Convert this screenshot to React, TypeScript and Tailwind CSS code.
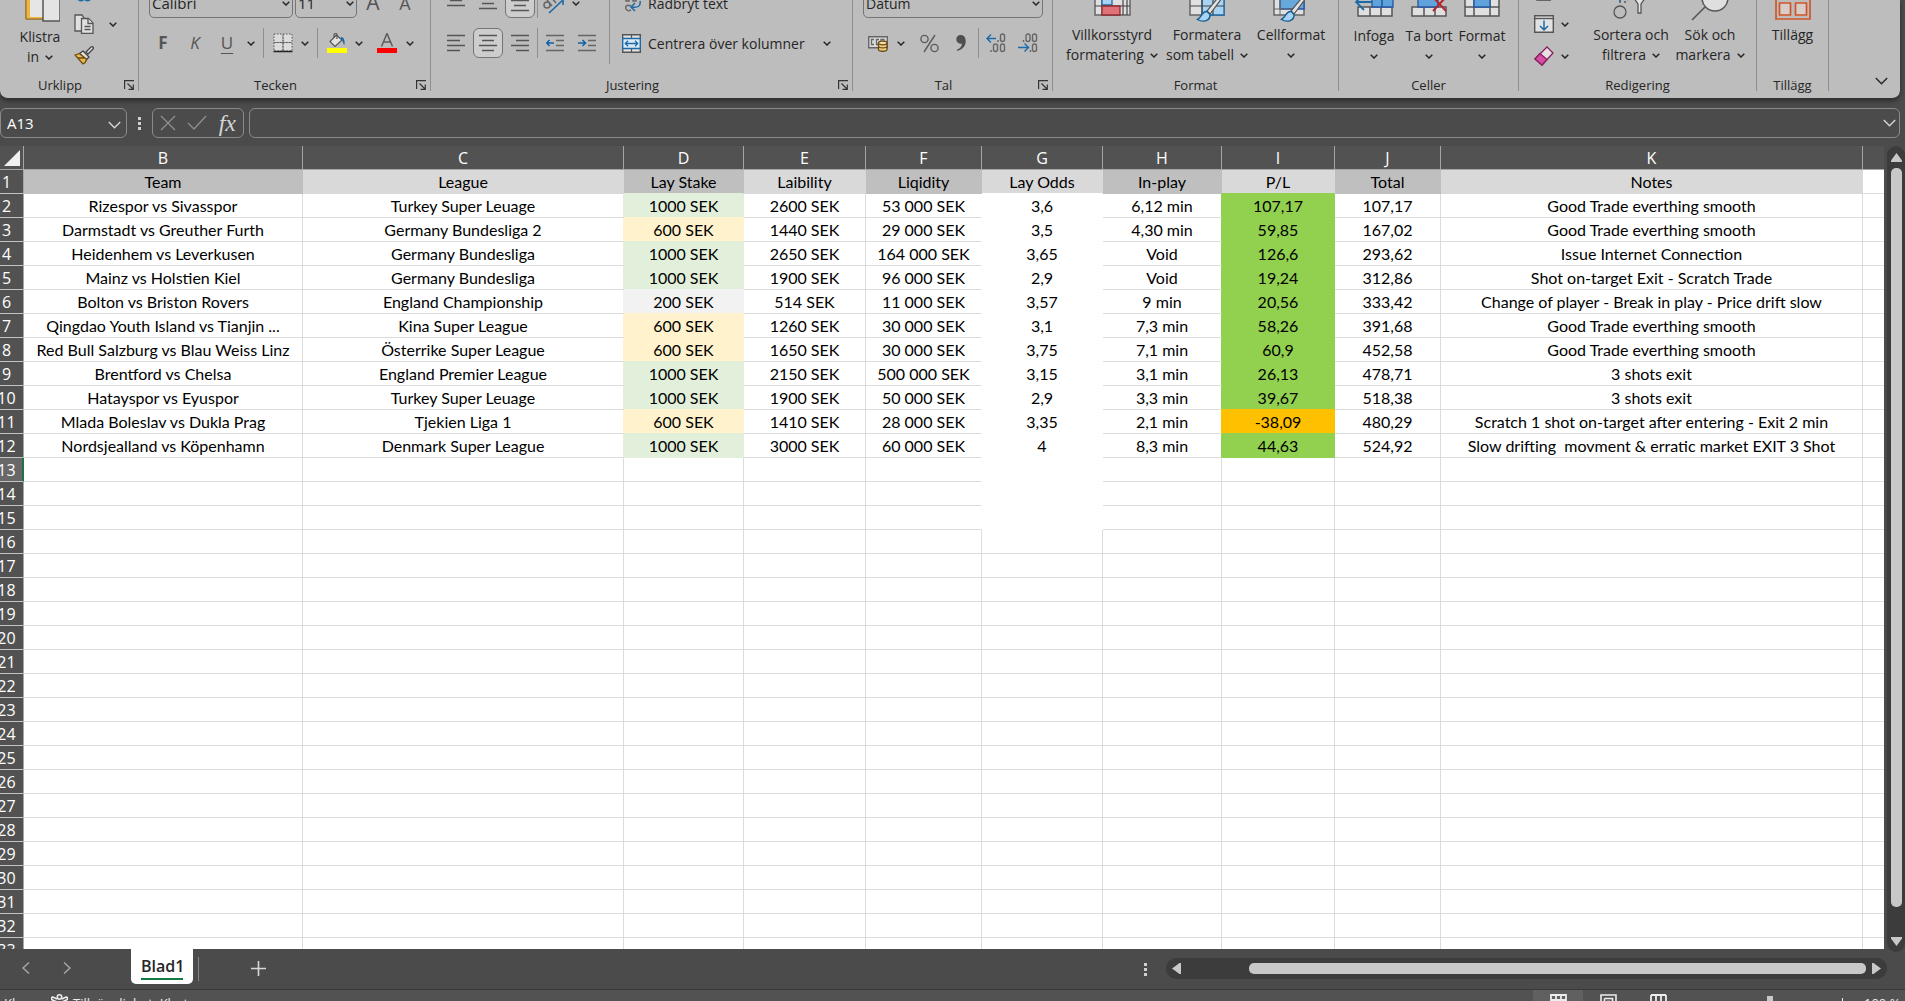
import React from 'react';

type Fill = 'dark' | 'light' | 'green' | 'yellow' | 'gray' | 'profit' | 'loss' | 'white' | 'none';

const bg: Record<Fill, string> = {
  dark: 'bg-[#bfbfbf]',
  light: 'bg-[#d9d9d9]',
  green: 'bg-[#e2efda]',
  yellow: 'bg-[#fff2cc]',
  gray: 'bg-[#f2f2f2]',
  profit: 'bg-[#92d050]',
  loss: 'bg-[#ffc000]',
  white: 'bg-white',
  none: '',
};

const right: Record<Fill, string> = {
  dark: 'border-r-[#bfbfbf]',
  light: 'border-r-[#d9d9d9]',
  green: 'border-r-[#e2efda]',
  yellow: 'border-r-[#fff2cc]',
  gray: 'border-r-[#f2f2f2]',
  profit: 'border-r-[#92d050]',
  loss: 'border-r-[#ffc000]',
  white: 'border-r-white',
  none: 'border-r-[#dcdcdc]',
};

const bottom: Record<Fill, string> = {
  dark: 'border-b-[#bfbfbf]',
  light: 'border-b-[#d9d9d9]',
  green: 'border-b-[#e2efda]',
  yellow: 'border-b-[#fff2cc]',
  gray: 'border-b-[#f2f2f2]',
  profit: 'border-b-[#92d050]',
  loss: 'border-b-[#ffc000]',
  white: 'border-b-white',
  none: 'border-b-[#dcdcdc]',
};

const letters = ['B', 'C', 'D', 'E', 'F', 'G', 'H', 'I', 'J', 'K'];

const rows = [
  ['Team', 'League', 'Lay Stake', 'Laibility', 'Liqidity', 'Lay Odds', 'In-play', 'P/L', 'Total', 'Notes'],
  ['Rizespor vs Sivasspor', 'Turkey Super Leuage', '1000 SEK', '2600 SEK', '53 000 SEK', '3,6', '6,12 min', '107,17', '107,17', 'Good Trade everthing smooth'],
  ['Darmstadt vs Greuther Furth', 'Germany Bundesliga 2', '600 SEK', '1440 SEK', '29 000 SEK', '3,5', '4,30 min', '59,85', '167,02', 'Good Trade everthing smooth'],
  ['Heidenhem vs Leverkusen', 'Germany Bundesliga', '1000 SEK', '2650 SEK', '164 000 SEK', '3,65', 'Void', '126,6', '293,62', 'Issue Internet Connection'],
  ['Mainz vs Holstien Kiel', 'Germany Bundesliga', '1000 SEK', '1900 SEK', '96 000 SEK', '2,9', 'Void', '19,24', '312,86', 'Shot on-target Exit - Scratch Trade'],
  ['Bolton vs Briston Rovers', 'England Championship', '200 SEK', '514 SEK', '11 000 SEK', '3,57', '9 min', '20,56', '333,42', 'Change of player - Break in play - Price drift slow'],
  ['Qingdao Youth Island vs Tianjin ...', 'Kina Super League', '600 SEK', '1260 SEK', '30 000 SEK', '3,1', '7,3 min', '58,26', '391,68', 'Good Trade everthing smooth'],
  ['Red Bull Salzburg vs Blau Weiss Linz', 'Österrike Super League', '600 SEK', '1650 SEK', '30 000 SEK', '3,75', '7,1 min', '60,9', '452,58', 'Good Trade everthing smooth'],
  ['Brentford vs Chelsa', 'England Premier League', '1000 SEK', '2150 SEK', '500 000 SEK', '3,15', '3,1 min', '26,13', '478,71', '3 shots exit'],
  ['Hatayspor vs Eyuspor', 'Turkey Super Leuage', '1000 SEK', '1900 SEK', '50 000 SEK', '2,9', '3,3 min', '39,67', '518,38', '3 shots exit'],
  ['Mlada Boleslav vs Dukla Prag', 'Tjekien Liga 1', '600 SEK', '1410 SEK', '28 000 SEK', '3,35', '2,1 min', '-38,09', '480,29', 'Scratch 1 shot on-target after entering - Exit 2 min'],
  ['Nordsjealland vs Köpenhamn', 'Denmark Super League', '1000 SEK', '3000 SEK', '60 000 SEK', '4', '8,3 min', '44,63', '524,92', 'Slow drifting  movment & erratic market EXIT 3 Shot'],
];

const fillOf = (row: number, col: number): Fill => {
  if (col > 9 || row > 33) return 'none';
  if (row === 1) return [0, 2, 4, 6, 8].includes(col) ? 'dark' : 'light';
  if (col === 5 && row <= 15) return 'white';
  if (row > 12) return 'none';
  if (col === 2) {
    const stake = rows[row - 1][2];
    if (stake === '1000 SEK') return 'green';
    return stake === '600 SEK' ? 'yellow' : 'gray';
  }
  if (col === 7) return rows[row - 1][7].startsWith('-') ? 'loss' : 'profit';
  return 'none';
};

const cellClass = (row: number, col: number) => {
  const own = fillOf(row, col);
  const next = fillOf(row, col + 1);
  const below = fillOf(row + 1, col);
  const r = next !== 'none' && row > 1 ? next : own;
  const b = below !== 'none' ? below : own;
  return `${bg[own]} ${right[r]} ${bottom[b]}`;
};

const Chevron = ({ className = 'h-[5px] w-[8px]' }: { className?: string }) => (
  <svg className={className} viewBox="0 0 8 5" fill="none" stroke="currentColor" strokeWidth="1.5">
    <path d="M.7.7 4 4 7.3.7" />
  </svg>
);

const ThinChevron = () => (
  <svg className="h-[8px] w-[13px]" viewBox="0 0 13 8" fill="none" stroke="currentColor" strokeWidth="1.4">
    <path d="M.8 1 6.5 6.7 12.2 1" />
  </svg>
);

const Drop = ({ label }: { label: string }) => (
  <button aria-label={label} className="flex h-[30px] w-4 items-center justify-center">
    <Chevron />
  </button>
);

const Tool = ({ label, className, children }: { label: string; className: string; children: React.ReactNode }) => (
  <button aria-label={label} className={`flex h-[30px] shrink-0 items-center justify-center ${className}`}>
    {children}
  </button>
);

const Sep = ({ className }: { className: string }) => <div className={`h-[30px] w-px shrink-0 bg-[#8f8f8f] ${className}`} />;

const Lines = ({ rows: r }: { rows: [number, number][] }) => (
  <svg className="h-[18px] w-[18px]" viewBox="0 0 18 18" fill="none" stroke="#555" strokeWidth="1.5">
    {r.map(([a, b], i) => (
      <path key={i} d={`M${a} ${1.5 + i * 5}H${b}`} />
    ))}
  </svg>
);

const Indent = ({ flip }: { flip?: boolean }) => (
  <svg className="h-[18px] w-[18px]" viewBox="0 0 18 18" fill="none" stroke="#666" strokeWidth="1.5">
    <path d="M0 1.5h18M10 6.5h8M10 11.5h8M0 16.5h18" />
    <path d={flip ? 'M0 9h7M4.500 6 7.500 9l-3 3' : 'M8 9H1M3.500 6 .8 9l2.700 3'} stroke="#0f62a8" />
  </svg>
);

type GroupProps = { title: string; width: string; launcher?: boolean; children: React.ReactNode };

const Group = ({ title, width, launcher, children }: GroupProps) => (
  <section className={`flex h-[91px] shrink-0 flex-col justify-end border-r border-[#8f8f8f] ${width}`}>
    {children}
    <div className="flex h-3 items-center">
      <h2 className={`flex-1 text-center text-[13px] leading-[14px] ${launcher ? 'pr-1' : ''}`}>{title}</h2>
      {launcher && (
        <button aria-label={`${title}, fler alternativ`} className="mr-1">
          <svg className="h-[10px] w-[10px]" viewBox="0 0 10 10" fill="none" stroke="#333" strokeWidth="1.2">
            <path d="M.6 9V.6H10M3.500 3.500l5.500 5.500M9.300 4.500v4.800H4.500" />
          </svg>
        </button>
      )}
    </div>
  </section>
);

type BigProps = { lines: string[]; width: string; lastRow?: boolean; children: React.ReactNode };

// large ribbon button: picture on top, one or two lines of text, chevron last
const Big = ({ lines, width, lastRow, children }: BigProps) => (
  <button className={`flex shrink-0 flex-col items-center text-[14px] leading-5 whitespace-nowrap ${width}`}>
    <svg className="h-10 w-10" viewBox="0 0 40 40" fill="none">
      {children}
    </svg>
    <span>{lines[0]}</span>
    <span className="flex h-5 items-center gap-[6px]">
      {lines[1]}
      {!lastRow && <Chevron />}
    </span>
  </button>
);

const Brush = () => (
  <>
    <path d="M38 9 23 29l-3-3L34 9z" fill="#e4e4e4" stroke="#555" strokeWidth="1.2" />
    <path d="M20 26.500c-5-1-5 6-9.500 8 6 3.500 13 1 12.500-5z" fill="#a9d3f3" stroke="#155e94" strokeWidth="1.4" />
  </>
);

const Ribbon = () => (
  <header className="mr-[5px] flex h-[99px] shrink-0 items-start overflow-hidden rounded-b-lg border-b border-[#333] bg-[#bdbdbd] text-[#262626] shadow-[0_2px_4px_#2b2b2b]">
    <Group title="Urklipp" width="w-[139px]" launcher>
      <div className="flex items-end pb-[6px] pl-[9px]">
        <div className="pb-[6px]">
          <Big lines={['Klistra', 'in']} width="w-[62px]">
            <path d="M6 0v32h17" stroke="#c98a1d" strokeWidth="1.500" />
            <path d="M6 0h18v32H6z" fill="#f1b53c" stroke="#7d6a45" />
            <path d="M10 0h14v30H10z" fill="#e6e6e6" />
            <path d="M23 10h17v24H23z" fill="#e4e4e4" stroke="#555" strokeWidth="1.500" />
          </Big>
        </div>
        <div className="ml-px">
          <div className="flex">
            <Tool label="Klipp ut" className="mb-[2px] w-6">
              <svg className="h-5 w-5" viewBox="0 0 20 20" fill="none" stroke="#1a6aa8" strokeWidth="1.800">
                <circle cx="7" cy="15.500" r="3" />
                <circle cx="13.500" cy="15.500" r="3" />
                <path d="M8 13 14 0M12 13 6 0" stroke="#555" />
              </svg>
            </Tool>
          </div>
          <div className="flex gap-[9px]">
            <Tool label="Kopiera" className="mb-[2px] w-6">
              <svg className="h-5 w-5" viewBox="0 0 20 20" fill="#e0e0e0" stroke="#555" strokeWidth="1.300">
                <path d="M7 17H1V1h7l2 3" />
                <path d="M7.500 4.500h7l4.500 4.500v10.300H7.500z" />
                <path d="M14 4.500v5h5M10.500 12.500h6M10.500 15.500h6" />
              </svg>
            </Tool>
            <Drop label="Kopieringsalternativ" />
          </div>
          <Tool label="Hämta format" className="mb-[2px] w-6">
            <svg className="h-5 w-5" viewBox="0 0 20 20" strokeWidth="1.300">
              <path d="m12 6 5-5c2-1 3 1 2 2l-5 5z" fill="#e0e0e0" stroke="#444" />
              <path d="M9 5l6 6-2.500 2.500-7-6z" fill="#e0e0e0" stroke="#444" />
              <path d="M5.500 7.500 1 9l8 9c3-1 3-3 3.500-4.500z" fill="#e9b949" stroke="#6b4c14" />
              <path d="M4 12h6" stroke="#6b4c14" />
            </svg>
          </Tool>
        </div>
      </div>
    </Group>

    <Group title="Tecken" width="w-[292px]" launcher>
      <div className="flex flex-col gap-[10px] pb-[21px]">
        <div className="flex items-center pl-[10px]">
          <div className="relative mr-[2px]">
            <select aria-label="Teckensnitt" className="h-[30px] w-36 appearance-none rounded-[5px] border border-[#757575] pl-[2px] text-[15px]">
              <option>Calibri</option>
            </select>
            <span className="pointer-events-none absolute top-[13px] right-[3px]"><Chevron /></span>
          </div>
          <div className="relative">
            <select aria-label="Teckenstorlek" className="h-[30px] w-[62px] appearance-none rounded-[5px] border border-[#757575] pl-[2px] text-[15px]">
              <option>11</option>
            </select>
            <span className="pointer-events-none absolute top-[13px] right-[3px]"><Chevron /></span>
          </div>
          <Tool label="Öka teckenstorlek" className="w-8 text-[21px] text-[#555]">A</Tool>
          <Tool label="Minska teckenstorlek" className="w-8 text-[18px] text-[#555]">A</Tool>
        </div>
        <div className="flex items-center pl-2">
          <Tool label="Fet" className="w-8 text-[17px] font-bold text-[#555]">F</Tool>
          <Tool label="Kursiv" className="w-8 text-[17px] text-[#555] italic">K</Tool>
          <Tool label="Understruken" className="w-8 text-[17px] text-[#555] underline underline-offset-4">U</Tool>
          <Drop label="Understrykning" />
          <Sep className="mx-1" />
          <Tool label="Kantlinjer" className="w-[29px]">
            <svg className="h-[20px] w-[20px]" viewBox="0 0 20 20" fill="none" stroke="#555">
              <path d="M1 1h18v17H1z" fill="#dcdcdc" stroke="none" />
              <path d="M1 1h18v17H1zM10 1v17M1 9.500h18" strokeDasharray="1.500 1.500" />
              <path d="M10 2v16M1 9.500h18" strokeWidth=".6" />
              <path d="M.5 18.500h19" stroke="#222" strokeWidth="1.500" />
            </svg>
          </Tool>
          <Drop label="Fler kantlinjer" />
          <Sep className="mx-1" />
          <Tool label="Fyllningsfärg" className="w-[29px]">
            <svg className="h-[20px] w-[20px]" viewBox="0 0 20 20" fill="none">
              <path d="M9.500 2 3 8.500 8 13.500l7-6.500z" fill="#e2e2e2" stroke="#555" strokeWidth="1.200" />
              <path d="M7 5V2c0-2 3-2 3 0v4" stroke="#555" strokeWidth="1.200" />
              <path d="M14 4c3 0 4 3 3.500 8-2-1-1-5-3.500-5z" fill="#1c6ba8" />
              <path d="M0 15h20v5H0z" fill="#ff0" />
            </svg>
          </Tool>
          <Drop label="Fler fyllningsfärger" />
          <Tool label="Teckenfärg" className="ml-[5px] w-[30px]">
            <svg className="h-[20px] w-[20px]" viewBox="0 0 20 20" fill="none">
              <path d="M4.500 13.500 10 .5l5.500 13M6.500 9h7" stroke="#5c5c5c" strokeWidth="1.500" />
              <path d="M0 15h20v5H0z" fill="red" />
            </svg>
          </Tool>
          <Drop label="Fler teckenfärger" />
        </div>
      </div>
    </Group>

    <Group title="Justering" width="w-[422px]" launcher>
      <div className="flex items-end pl-[9px]">
        <div className="flex flex-col gap-[10px] pb-[21px]">
          <div className="flex items-center">
            <Tool label="Justera överst" className="w-8"><Lines rows={[[0, 18], [3, 15], [0, 18]]} /></Tool>
            <Tool label="Centrera lodrätt" className="w-8 pt-[6px]"><Lines rows={[[0, 18], [3, 15], [0, 18]]} /></Tool>
            <Tool label="Justera nederst" className="mx-px w-[30px] rounded-md border border-[#757575] bg-[#cdcdcd] pt-[10px]"><Lines rows={[[0, 18], [3, 15], [0, 18]]} /></Tool>
            <Sep className="ml-px" />
            <Tool label="Orientering" className="w-[30px]">
              <svg className="h-[22px] w-[22px]" viewBox="0 0 22 22" fill="none">
                <circle cx="5" cy="13" r="3" stroke="#666" strokeWidth="1.500" />
                <path d="m5 8 5 6M8 4l6 7" stroke="#666" strokeWidth="1.500" />
                <path d="M7 21 21 8m-6-1h6v6" stroke="#1c6ba8" strokeWidth="1.600" />
              </svg>
            </Tool>
            <Drop label="Orienteringsalternativ" />
          </div>
          <div className="flex items-center">
            <Tool label="Vänsterjustera" className="w-8"><Lines rows={[[0, 18], [0, 13], [0, 18], [0, 13]]} /></Tool>
            <Tool label="Centrera" className="mx-px w-[30px] rounded-md border border-[#757575] bg-[#cdcdcd]"><Lines rows={[[0, 18], [3, 15], [0, 18], [3, 15]]} /></Tool>
            <Tool label="Högerjustera" className="w-8"><Lines rows={[[0, 18], [5, 18], [0, 18], [5, 18]]} /></Tool>
            <Sep className="ml-px" />
            <Tool label="Minska indrag" className="w-[34px]"><Indent /></Tool>
            <Tool label="Öka indrag" className="w-[30px]"><Indent flip /></Tool>
          </div>
        </div>
        <div className="mb-[15px] ml-[7px] h-[80px] w-px bg-[#8f8f8f]" />
        <div className="flex flex-col gap-[10px] pb-[21px] pl-3 text-[14px]">
          <button className="flex h-[30px] items-center gap-[7px]">
            <svg className="h-[20px] w-[19px]" viewBox="0 0 19 20" fill="none" strokeWidth="1.500">
              <path d="M4 3v5h3V5H4M11 2v6h3V5h-3M9 13c-4-2-6 0-5 3 1 2 3 2 5 1" stroke="#666" />
              <path d="M18 8c1 5-2 7-8 6m3-4-4 4 4 4" stroke="#1c6ba8" />
            </svg>
            Radbryt text
          </button>
          <div className="flex items-center">
            <button className="flex h-[30px] w-[197px] items-center gap-[7px] whitespace-nowrap">
              <svg className="h-[19px] w-[19px]" viewBox="0 0 19 19" fill="none">
                <path d="M.7.7h17.600v17.600H.7z" fill="#e0e0e0" stroke="#555" strokeWidth="1.400" />
                <path d="M9.500 1v17" stroke="#555" strokeWidth="1.200" />
                <path d="M.7 4.500h17.600v10H.7z" fill="#dceaf5" stroke="#1c6ba8" strokeWidth="1.400" />
                <path d="M3.500 9.500h12M6 6.800 3.300 9.500 6 12.200M13 6.800l2.700 2.700-2.700 2.700" stroke="#1c6ba8" strokeWidth="1.300" />
              </svg>
              Centrera över kolumner
            </button>
            <Drop label="Fler kopplingsalternativ" />
          </div>
        </div>
      </div>
    </Group>

    <Group title="Tal" width="w-[200px]" launcher>
      <div className="flex flex-col gap-[10px] pb-[21px] pl-[10px]">
        <div className="relative w-[180px]">
          <select aria-label="Talformat" className="h-[30px] w-full appearance-none rounded-[5px] border border-[#757575] pl-[2px] text-[14px]">
            <option>Datum</option>
          </select>
          <span className="pointer-events-none absolute top-[13px] right-[3px]"><Chevron /></span>
        </div>
        <div className="flex items-center">
          <Tool label="Redovisningsformat" className="w-[30px]">
            <svg className="h-[18px] w-[20px]" viewBox="0 0 20 18" fill="none">
              <path d="M.7 2.700h18.600v11H.7z" fill="#dadada" stroke="#666" strokeWidth="1.400" />
              <path d="M6 5.500H3.500v5H6M11 5.500H8.500v5H10M13 8V5.500h3V8" stroke="#666" strokeWidth="1.300" />
              <path d="M10.500 9v6.500c0 2.300 8.500 2.300 8.500 0V9z" fill="#f0cf85" stroke="#6b4c14" strokeWidth="1.300" />
              <ellipse cx="14.750" cy="9" rx="4.250" ry="1.800" fill="#f5dca5" stroke="#6b4c14" strokeWidth="1.300" />
              <path d="M10.500 12.300c0 2.200 8.500 2.200 8.500 0" stroke="#6b4c14" strokeWidth="1.200" />
            </svg>
          </Tool>
          <Drop label="Fler redovisningsformat" />
          <Tool label="Procentformat" className="w-[40px]">
            <svg className="h-[19px] w-[19px]" viewBox="0 0 19 19" fill="none" stroke="#5c5c5c" strokeWidth="1.400">
              <circle cx="4.500" cy="5" r="3.600" />
              <circle cx="14.500" cy="14" r="3.600" />
              <path d="M15 1 4 18" />
            </svg>
          </Tool>
          <Tool label="Kommaavgränsat format" className="w-6">
            <svg className="h-[16px] w-[10px]" viewBox="0 0 10 16" fill="#4f4f4f">
              <path d="M4.500 0C7.500 0 9.700 2 9.700 6c0 5-3 8.500-8.500 10l-.4-1.200C4 13.500 6 11.500 6 8.500 2.500 9.500.3 7 .3 4.300.3 1.800 2 0 4.500 0z" />
            </svg>
          </Tool>
          <Sep className="ml-[5px]" />
          <Tool label="Öka decimal" className="w-[33px]">
            <svg className="h-[20px] w-[20px]" viewBox="0 0 20 20" fill="none" strokeWidth="1.400">
              <rect x="14.500" y="1" width="4" height="7.500" rx="2" stroke="#666" />
              <rect x="7.500" y="11" width="4" height="7.500" rx="2" stroke="#666" />
              <rect x="14.500" y="11" width="4" height="7.500" rx="2" stroke="#666" />
              <path d="M12 7v2M5 17v2" stroke="#666" />
              <path d="M10 5.500H1M5 1.500l-4 4 4 4" stroke="#1c6ba8" />
            </svg>
          </Tool>
          <Tool label="Minska decimal" className="w-8">
            <svg className="h-[20px] w-[20px]" viewBox="0 0 20 20" fill="none" strokeWidth="1.400">
              <rect x="8" y="1" width="4" height="7.500" rx="2" stroke="#666" />
              <rect x="14.500" y="1" width="4" height="7.500" rx="2" stroke="#666" />
              <rect x="14.500" y="11" width="4" height="7.500" rx="2" stroke="#666" />
              <path d="M5.500 7v2M12.500 17v2" stroke="#666" />
              <path d="M0 14.500h10M6.500 10.500l4 4-4 4" stroke="#1c6ba8" />
            </svg>
          </Tool>
        </div>
      </div>
    </Group>

    <Group title="Format" width="w-[286px]">
      <div className="flex items-end pb-[14px] pl-[10px]">
        <Big lines={['Villkorsstyrd', 'formatering']} width="w-[98px]">
          <path d="M3 0h35v30H3z" fill="#e0e0e0" stroke="#666" strokeWidth="1.500" />
          <path d="M3 21h35M10 0v30M31 0v30M35 0v30" stroke="#444" strokeWidth="1.200" />
          <path d="M10 8h10v12H10z" fill="#a9d3f3" stroke="#1c6ba8" strokeWidth="1.300" />
          <path d="M10 21h18v9H10z" fill="#e17378" stroke="#8f2b30" strokeWidth="1.300" />
        </Big>
        <Big lines={['Formatera', 'som tabell']} width="w-[92px]">
          <path d="M3 0h34v30H3z" fill="#e0e0e0" stroke="#666" strokeWidth="1.500" />
          <path d="M15 10h22v20H15z" fill="#a9d3f3" stroke="#1c6ba8" strokeWidth="1.300" />
          <path d="M3 21h34M15 0v30M26 0v30" stroke="#444" strokeWidth="1.200" />
          <Brush />
        </Big>
        <Big lines={['Cellformat', '']} width="w-[76px]">
          <path d="M3 0h30v30H3z" fill="#e0e0e0" stroke="#666" strokeWidth="1.500" />
          <path d="M9 4h24v20H9z" fill="#66a7dc" stroke="#2456a8" strokeWidth="1.300" />
          <path d="M9 0v30M3 24h20" stroke="#666" />
          <Brush />
        </Big>
      </div>
    </Group>

    <Group title="Celler" width="w-[180px]">
      <div className="flex items-end pb-[13px] pl-[6px]">
        <Big lines={['Infoga', '']} width="w-[58px]">
          <path d="M4 21h34v9H4zM16 21v9M27 21v9" fill="#e0e0e0" stroke="#555" strokeWidth="1.500" />
          <path d="M18 0h21v21H18z" fill="#5fa3da" stroke="#2456a8" strokeWidth="1.300" />
          <path d="M28 12v9M10 8l-8 8 8 8M2 16h16" stroke="#1c6ba8" strokeWidth="1.800" />
        </Big>
        <Big lines={['Ta bort', '']} width="w-[52px]">
          <path d="M3 21h34v9H3zM15 21v9M26 21v9" fill="#e0e0e0" stroke="#555" strokeWidth="1.500" />
          <path d="M9 0h20v21H9z" fill="#5fa3da" stroke="#2456a8" strokeWidth="1.300" />
          <path d="m24 11 13 14M37 11 24 25" stroke="#b3262d" strokeWidth="2" />
        </Big>
        <Big lines={['Format', '']} width="w-[54px]">
          <path d="M3 0h34v30H3z" fill="#e0e0e0" stroke="#555" strokeWidth="1.500" />
          <path d="M3 21h34M12 0v30M28 0v30" stroke="#555" strokeWidth="1.500" />
          <path d="M12 5h16v16H12z" fill="#5fa3da" stroke="#2456a8" strokeWidth="1.300" />
        </Big>
      </div>
    </Group>

    <Group title="Redigering" width="w-[238px]">
      <div className="flex items-end pb-[6px] pl-[13px]">
        <div>
          <div className="mb-[2px] flex">
            <Tool label="Autosumma" className="w-6">
              <svg className="h-5 w-5" viewBox="0 0 20 20" fill="none" stroke="#666" strokeWidth="2">
                <path d="M17 1H4l7 9-7 8h13" />
              </svg>
            </Tool>
          </div>
          <div className="mb-[2px] flex gap-px">
            <Tool label="Fyll" className="w-6">
              <svg className="h-5 w-5" viewBox="0 0 20 20" fill="none">
                <path d="M.7 1.700h18.600v16.600H.7z" fill="#e2e2e2" stroke="#555" strokeWidth="1.400" />
                <path d="M.7 4.500h18.600" stroke="#555" strokeWidth="1.400" />
                <path d="M10 6.500v9.500M6 12l4 4 4-4" stroke="#1c6ba8" strokeWidth="1.500" />
              </svg>
            </Tool>
            <Drop label="Fyllalternativ" />
          </div>
          <div className="mb-[2px] flex gap-px">
            <Tool label="Radera" className="w-6">
              <svg className="h-5 w-5" viewBox="0 0 20 20" strokeWidth="1.300">
                <path d="m13 1 6 6L8 19l-7-6z" fill="#e6e0e4" stroke="#86205f" />
                <path d="m6 7.500 7 6L8 19l-7-6z" fill="#d64ea4" stroke="#86205f" />
              </svg>
            </Tool>
            <Drop label="Raderingsalternativ" />
          </div>
        </div>
        <div className="ml-[18px] flex pb-2">
          <Big lines={['Sortera och', 'filtrera']} width="w-[80px]">
            <path d="m4 10 5 5 4-7 4 7" stroke="#1c6ba8" strokeWidth="2" />
            <path d="M8 17h2m3 0h2" stroke="#555" strokeWidth="1.500" />
            <circle cx="9" cy="27" r="6" stroke="#555" strokeWidth="1.300" />
            <path d="M20 9h17l-7 10v9h-3v-9z" fill="#e4e4e4" stroke="#555" strokeWidth="1.300" />
          </Big>
          <Big lines={['Sök och', 'markera']} width="w-[78px]">
            <circle cx="25" cy="13" r="13" fill="#dfdfdf" stroke="#555" strokeWidth="1.500" />
            <path d="M15 22 2 35" stroke="#555" strokeWidth="1.600" />
          </Big>
        </div>
      </div>
    </Group>

    <Group title="Tillägg" width="w-[72px]">
      <div className="pb-[14px]">
        <Big lines={['Tillägg', '']} width="w-full" lastRow>
          <g stroke="#cf5528" strokeWidth="1.700">
            <path d="M3 0h34v34H3z" />
            <path d="M6.500 3h11v11h-11zM22.500 3h11v11h-11zM6.500 18h11v12h-11zM22.500 18h11v12h-11z" fill="#d8cdc8" />
          </g>
        </Big>
      </div>
    </Group>

    <button aria-label="Dölj menyfliksområdet" className="mt-[77px] mr-3 ml-auto">
      <ThinChevron />
    </button>
  </header>
);

const FormulaBar = () => (
  <div className="mt-[9px] mr-[5px] mb-2 flex h-[30px] shrink-0 items-stretch text-[#d5d5d5]">
    <div className="relative w-[127px]">
      <input aria-label="Namnruta" defaultValue="A13" className="h-[30px] w-full rounded-md border border-[#8a8a8a] pl-[6px] text-[15px] text-white" />
      <span className="pointer-events-none absolute top-[13px] right-[6px]"><ThinChevron /></span>
    </div>
    <div className="flex w-[25px] flex-col items-center justify-center gap-[2px]">
      <i className="h-[3px] w-[3px] bg-[#d0d0d0]" />
      <i className="h-[3px] w-[3px] bg-[#d0d0d0]" />
      <i className="h-[3px] w-[3px] bg-[#d0d0d0]" />
    </div>
    <div className="flex w-[92px] items-center justify-between rounded-md border border-[#8a8a8a] px-[7px]">
      <button aria-label="Avbryt">
        <svg className="h-4 w-4" viewBox="0 0 16 16" stroke="#8f8f8f" strokeWidth="1.300"><path d="m1 1 14 14M15 1 1 15" /></svg>
      </button>
      <button aria-label="Ange">
        <svg className="h-4 w-5" viewBox="0 0 20 16" fill="none" stroke="#8f8f8f" strokeWidth="1.300"><path d="m1 8 6 6L19 1" /></svg>
      </button>
      <button aria-label="Infoga funktion" className="font-['Liberation_Serif',serif] text-[24px] leading-5 italic">fx</button>
    </div>
    <div className="relative ml-[5px] flex-1">
      <input aria-label="Formelfält" className="h-[30px] w-full rounded-md border border-[#8a8a8a] px-2 text-[15px] text-white" />
      <span className="pointer-events-none absolute top-[11px] right-1"><ThinChevron /></span>
    </div>
  </div>
);

const Sheet = () => (
  <div className="min-w-0 flex-1 overflow-hidden bg-white">
    <div className="-ml-[11px]">
      <table className="w-full table-fixed border-separate border-spacing-0 text-center whitespace-pre">
        <colgroup>
          <col className="w-[35px]" />
          <col className="w-[279px]" />
          <col className="w-[321px]" />
          <col className="w-[120px]" />
          <col className="w-[122px]" />
          <col className="w-[116px]" />
          <col className="w-[121px]" />
          <col className="w-[119px]" />
          <col className="w-[113px]" />
          <col className="w-[106px]" />
          <col className="w-[422px]" />
          <col />
        </colgroup>
        <thead>
          <tr className="bg-[#525252] text-[16px] leading-[22px] text-white">
            <th className="h-6 border-r border-b border-[#a6a6a6] p-0">
              <svg className="mr-[3px] ml-auto h-4 w-4" viewBox="0 0 16 16"><path d="M16 0v16H0z" fill="#f0f0f0" /></svg>
            </th>
            {letters.map((l) => (
              <th key={l} className="h-6 border-r border-b border-[#a6a6a6] p-0 pt-px font-normal">{l}</th>
            ))}
            <th className="h-6 border-b border-[#a6a6a6] p-0" />
          </tr>
        </thead>
        <tbody>
          {Array.from({ length: 33 }, (_, i) => i + 1).map((n) => (
            <tr key={n} className="text-[16px] leading-[23px]">
              <th
                className={`h-6 border-r border-b border-b-[#c4c4c4] p-0 font-normal text-white ${
                  n === 13 ? 'border-r-[#217346] bg-[#686868] shadow-[inset_-1px_0_#217346]' : 'border-r-[#a6a6a6] bg-[#525252]'
                }`}
              >
                <div className="w-[34px] pt-px pl-px leading-[22px]">{n}</div>
              </th>
              {letters.map((l, col) => (
                <td key={l} className={`h-6 border-r border-b p-0 font-[Lato,sans-serif] text-black ${cellClass(n, col)}`}>
                  {rows[n - 1]?.[col]}
                </td>
              ))}
              <td className="h-6 border-b border-b-[#dcdcdc] p-0" />
            </tr>
          ))}
        </tbody>
      </table>
    </div>
  </div>
);

const VerticalScroll = () => (
  <div className="-mb-[3px] ml-[3px] flex w-[18px] shrink-0 flex-col items-center gap-[6px] rounded-[9px] bg-[#3c3c3c] pt-[7px] pb-[6px]">
    <svg className="h-[9px] w-[11px]" viewBox="0 0 11 9" fill="#c8c8c8"><path d="M5.500 0 11 7.500V9H0V7.500z" /></svg>
    <div className="w-[11px] flex-1 rounded-[5px] bg-[#c8c8c8]" />
    <svg className="mt-6 h-[9px] w-[11px]" viewBox="0 0 11 9" fill="#c8c8c8"><path d="M5.500 9 11 1.500V0H0v1.500z" /></svg>
  </div>
);

const TabBar = () => (
  <div className="flex h-10 shrink-0 items-start">
    <nav className="flex h-[37px] w-[131px] items-center gap-[33px] pl-[22px] text-[#a8a8a8]">
      <button aria-label="Föregående blad">
        <svg className="h-3 w-2" viewBox="0 0 8 12" fill="none" stroke="currentColor" strokeWidth="1.400"><path d="M7 .5 1 6l6 5.500" /></svg>
      </button>
      <button aria-label="Nästa blad">
        <svg className="h-3 w-2" viewBox="0 0 8 12" fill="none" stroke="currentColor" strokeWidth="1.400"><path d="m1 .5 6 5.500-6 5.500" /></svg>
      </button>
    </nav>
    <button className="h-[35px] w-[62px] rounded-b-[5px] bg-white px-[10px] text-[16px] font-semibold text-[#262626]">
      <span className="block border-b-2 border-[#107c41] leading-6">Blad1</span>
    </button>
    <div className="mt-2 ml-[5px] h-6 w-px bg-[#858585]" />
    <button aria-label="Nytt blad" className="mt-3 ml-[52px]">
      <svg className="h-[15px] w-[15px]" viewBox="0 0 15 15" stroke="#d8d8d8" strokeWidth="1.600"><path d="M7.500 0v15M0 7.500h15" /></svg>
    </button>
    <div className="mt-[14px] mr-[19px] ml-auto flex flex-col gap-[2px]">
      <i className="h-[3px] w-[3px] bg-[#d0d0d0]" />
      <i className="h-[3px] w-[3px] bg-[#d0d0d0]" />
      <i className="h-[3px] w-[3px] bg-[#d0d0d0]" />
    </div>
    <div className="mt-[9px] mr-[18px] flex h-[21px] w-[721px] items-center gap-[6px] rounded-[10px] bg-[#3c3c3c] px-[6px]">
      <svg className="h-[11px] w-[9px]" viewBox="0 0 9 11" fill="#c8c8c8"><path d="M0 5.500 7.500 0H9v11H7.500z" /></svg>
      <div className="ml-[62px] h-[11px] flex-1 rounded-[5px] bg-[#c8c8c8]" />
      <svg className="h-[11px] w-[9px]" viewBox="0 0 9 11" fill="#c8c8c8"><path d="M9 5.500 1.500 0H0v11h1.500z" /></svg>
    </div>
  </div>
);

const StatusBar = () => (
  <footer className="flex h-3 shrink-0 items-start overflow-hidden border-t border-[#383838] bg-[#525252] text-[13px] leading-[18px] text-[#ededed]">
    <span className="w-[51px] pt-1 pl-1">Klar</span>
    <svg className="mt-1 mr-[5px] h-4 w-[17px]" viewBox="0 0 17 16" fill="none" stroke="#ededed" strokeWidth="1.600">
      <circle cx="8.500" cy="3" r="2.200" />
      <path d="M6 5 2 3C0 3 0 5 1.500 6L6 8v7M11 5l4-2c2 0 2 2 .5 3L11 8v7" />
    </svg>
    <span className="pt-1">Tillgänglighet: Klart</span>
    <div className="ml-auto flex">
      <button aria-label="Normal" className="flex h-3 w-[50px] justify-center bg-[#606060] pt-1">
        <svg className="h-4 w-[17px] shrink-0" viewBox="0 0 17 16" fill="none" stroke="#ededed" strokeWidth="1.800"><path d="M1 1h15v14H1zM6 1v14M11 1v14M1 6h15" /></svg>
      </button>
      <button aria-label="Sidlayout" className="flex h-3 w-[50px] justify-center pt-1">
        <svg className="h-4 w-[17px] shrink-0" viewBox="0 0 17 16" fill="none" stroke="#ededed" strokeWidth="1.600"><path d="M1 1h15v14H1zM4.500 4.500h8V15M4.500 4.500V15M7 7.500h3" /></svg>
      </button>
      <button aria-label="Förhandsgranska sidbrytningar" className="flex h-3 w-[50px] justify-center pt-1">
        <svg className="h-4 w-[17px] shrink-0" viewBox="0 0 17 16" fill="none" stroke="#ededed" strokeWidth="1.800"><path d="M1 1h15M1 1v14M6 1v10M11 1v10M16 1v14" /></svg>
      </button>
    </div>
    <i className="mt-[6px] ml-[84px] h-4 w-[6px] bg-[#c8c8c8]" />
    <i className="mt-2 ml-[69px] h-3 w-px bg-[#ededed]" />
    <span className="w-[62px] pt-1 pl-[21px] whitespace-nowrap">100 %</span>
  </footer>
);

const App: React.FC = () => {
  return (
    <div className="flex h-screen flex-col overflow-hidden bg-[#4b4b4b] font-['Open_Sans','Noto_Sans',sans-serif]">
      <Ribbon />
      <FormulaBar />
      <main className="flex min-h-0 flex-1">
        <Sheet />
        <VerticalScroll />
      </main>
      <TabBar />
      <StatusBar />
    </div>
  );
};

export default App;
